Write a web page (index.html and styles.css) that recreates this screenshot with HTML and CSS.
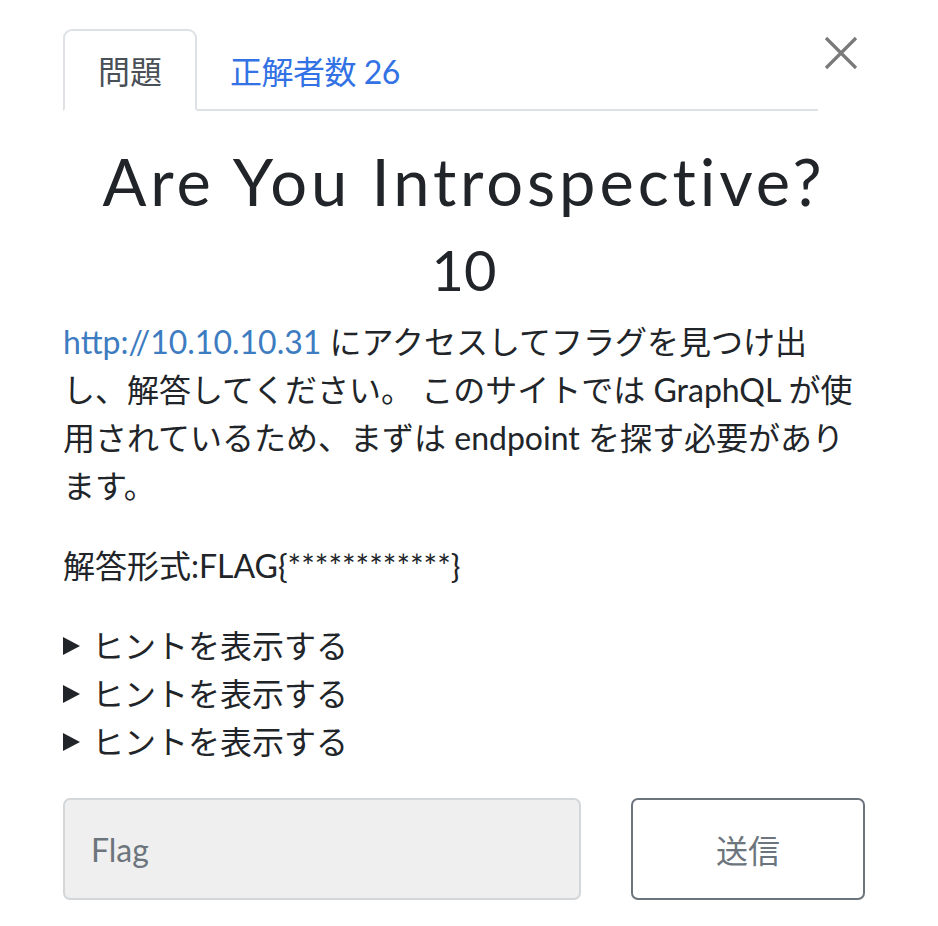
FILE: index.html
```html
<!DOCTYPE html>
<html lang="ja">
<head>
<meta charset="utf-8">
<title>Are You Introspective?</title>
<link rel="stylesheet" href="styles.css">
</head>
<body>
<div class="modal">
  <div class="head">
    <ul class="tabs">
      <li class="tab active">問題</li>
      <li class="tab link">正解者数 26</li>
    </ul>
    <button class="close" aria-label="Close">
      <svg width="34" height="34" viewBox="0 0 34 34"><path d="M2 2 L32 32 M32 2 L2 32" stroke="#7a7a7a" stroke-width="3.2" fill="none"/></svg>
    </button>
  </div>
  <h2 class="title">Are You Introspective?</h2>
  <h3 class="value">10</h3>
  <div class="desc">
    <p><a href="#">http://10.10.10.31</a> にアクセスしてフラグを見つけ出し、解答してください。 このサイトでは GraphQL が使用されているため、まずは endpoint を探す必要があります。</p>
    <p>解答形式:FLAG{************}</p>
  </div>
  <div class="hints">
    <details><summary>ヒントを表示する</summary></details>
    <details><summary>ヒントを表示する</summary></details>
    <details><summary>ヒントを表示する</summary></details>
  </div>
  <div class="submit">
    <input class="flag" type="text" placeholder="Flag">
    <button class="send">送信</button>
  </div>
</div>
</body>
</html>
```
FILE: styles.css
```css
html, body {
  margin: 0;
  padding: 0;
  background: #fff;
}
body {
  font-family: Lato, "Noto Sans CJK JP", sans-serif;
  color: #212529;
}
.modal {
  width: 802px;
  padding: 29px 0 0 63px;
}
.head {
  display: flex;
  align-items: flex-start;
}
.tabs {
  list-style: none;
  margin: 0;
  padding: 0;
  display: flex;
  width: 755px;
  border-bottom: 2px solid #dee2e6;
}
.tab {
  font-size: 32px;
  height: 82px;
  box-sizing: border-box;
  padding: 0 33px;
  display: flex;
  align-items: center;
  margin-bottom: -2px;
  border: 2px solid transparent;
  border-radius: 9px 9px 0 0;
}
.tab.active {
  border-color: #dee2e6 #dee2e6 #fff;
  color: #495057;
  background: #fff;
}
.tab.link {
  color: #3272e4;
  padding-left: 31px;
  letter-spacing: -0.5px;
}
.close {
  margin-left: auto;
  margin-right: 7px;
  margin-top: 7px;
  padding: 0;
  border: 0;
  background: none;
  width: 34px;
  height: 34px;
}
.close svg { display: block; }
.title {
  margin: 30px 0 0;
  text-align: center;
  font-size: 65px;
  font-weight: 400;
  letter-spacing: 3.9px;
  line-height: 80px;
}
.value {
  margin: 15px 0 0;
  text-align: center;
  font-size: 56px;
  font-weight: 400;
  line-height: 68px;
}
.desc {
  width: 795px;
  margin-top: 14px;
  font-size: 32px;
  line-height: 48px;
}
.desc p {
  margin: 0 0 32px;
}
.desc a {
  color: #3d7cc0;
  text-decoration: none;
}
.hints {
  font-size: 32px;
  line-height: 48px;
}
.hints summary {
  cursor: pointer;
  list-style: none;
  display: flex;
  align-items: center;
}
.hints summary::-webkit-details-marker {
  display: none;
}
.hints summary::before {
  content: "";
  flex: none;
  width: 0;
  height: 0;
  border-left: 17px solid #212529;
  border-top: 9px solid transparent;
  border-bottom: 9px solid transparent;
  margin-right: 12px;
}
.submit {
  display: flex;
  gap: 50px;
  margin-top: 32px;
}
.flag {
  width: 518px;
  height: 102px;
  box-sizing: border-box;
  background: #efefef;
  border: 2px solid #d4d7da;
  border-radius: 7px;
  font: 32px Lato, "Noto Sans CJK JP", sans-serif;
  padding: 0 26px;
  color: #495057;
}
.flag::placeholder {
  color: #6c757d;
}
.send {
  width: 234px;
  height: 102px;
  box-sizing: border-box;
  background: #fff;
  border: 2px solid #6c757d;
  border-radius: 7px;
  font: 32px Lato, "Noto Sans CJK JP", sans-serif;
  color: #6c757d;
}
```
